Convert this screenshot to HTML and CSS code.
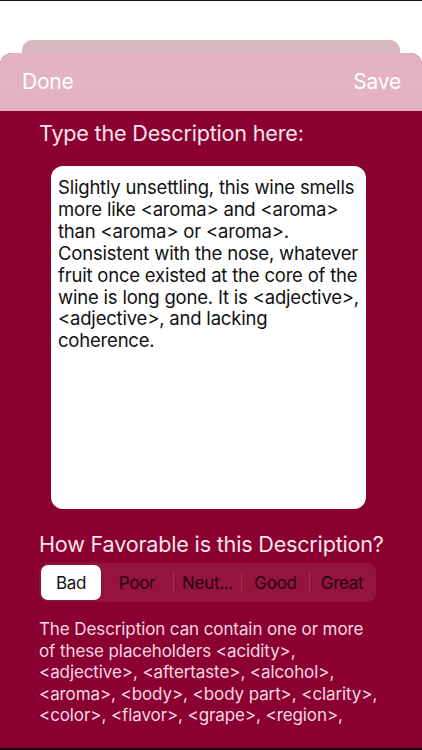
FILE: index.html
```html
<!DOCTYPE html>
<html lang="en">
<head>
  <meta charset="UTF-8">
  <meta name="viewport" content="width=device-width, initial-scale=1.0">
  <title>Edit Description</title>
  <link rel="stylesheet" href="styles.css">
</head>
<body>
  <div class="screen">
    <div class="sheet-behind"></div>
    <div class="sheet">
      <div class="sheet-header">
        <a href="#" class="nav-btn">Done</a>
        <a href="#" class="nav-btn">Save</a>
      </div>
      <div class="sheet-body">
        <div class="field-label">Type the Description here:</div>
        <div class="description-box" contenteditable="true">Slightly unsettling, this wine smells more like &lt;aroma&gt; and &lt;aroma&gt; than &lt;aroma&gt; or &lt;aroma&gt;. Consistent with the nose, whatever fruit once existed at the core of the wine is long gone. It is &lt;adjective&gt;, &lt;adjective&gt;, and lacking coherence.</div>
        <div class="field-label favor-label">How Favorable is this Description?</div>
        <div class="segmented">
          <button class="segment selected">Bad</button>
          <button class="segment">Poor</button>
          <button class="segment divided">Neut...</button>
          <button class="segment divided">Good</button>
          <button class="segment divided">Great</button>
        </div>
        <p class="hint">The Description can contain one or more of these placeholders &lt;acidity&gt;, &lt;adjective&gt;, &lt;aftertaste&gt;, &lt;alcohol&gt;, &lt;aroma&gt;, &lt;body&gt;, &lt;body part&gt;, &lt;clarity&gt;, &lt;color&gt;, &lt;flavor&gt;, &lt;grape&gt;, &lt;region&gt;,</p>
      </div>
    </div>
  </div>
</body>
</html>
```

FILE: styles.css
```css
* {
  box-sizing: border-box;
}

body {
  margin: 0;
  background-color: #fff;
  font-family: Inter, "Liberation Sans", sans-serif;
}

.screen {
  width: 422px;
  height: 750px;
  display: flex;
  flex-direction: column;
  border-top: 1px solid #111;
  border-bottom: 2px solid #111;
  overflow: hidden;
}

/* the card peeking out behind the modal */
.sheet-behind {
  margin: 39px 22px 0;
  height: 13px;
  background-color: #d7b8bf;
  border-radius: 10px 10px 0 0;
}

.sheet {
  flex: 1;
  display: flex;
  flex-direction: column;
  border-radius: 12px 12px 0 0;
  overflow: hidden;
  background-color: #8a0031;
}

.sheet-header {
  height: 58px;
  display: flex;
  justify-content: space-between;
  align-items: center;
  padding: 0 22px 2px;
  background: linear-gradient(to bottom, #e2b1c3, #e4b4c6 60%, #e1afc1);
}

.nav-btn {
  color: #fff;
  text-decoration: none;
  font-size: 21px;
  letter-spacing: -0.2px;
}

.nav-btn:last-child {
  margin-right: -1px;
}

.sheet-body {
  flex: 1;
  padding: 8px 0 0 39px;
}

.field-label {
  color: #f7e3ea;
  font-size: 21.6px;
  line-height: 28px;
  letter-spacing: -0.2px;
}

.description-box {
  margin: 19px 0 0 12px;
  width: 315px;
  height: 343px;
  padding: 11px 4px 11px 7px;
  background-color: #fff;
  border-radius: 12px;
  color: #111;
  font-size: 18.5px;
  line-height: 21.9px;
  letter-spacing: -0.2px;
  outline: none;
}

.favor-label {
  margin-top: 21px;
}

.segmented {
  margin-top: 5px;
  width: 337px;
  height: 39px;
  padding: 2px;
  display: grid;
  grid-template-columns: 60px 72px 68px 68px 1fr;
  background-color: #94143d;
  border-radius: 9px;
}

.segment {
  border: none;
  background: none;
  padding: 0;
  font-family: inherit;
  font-size: 17px;
  letter-spacing: -0.3px;
  color: #260010;
  cursor: pointer;
}

.segment.selected {
  background-color: #fff;
  color: #111;
  border-radius: 7px;
  box-shadow: 0 1px 3px rgba(0,0,0,0.15);
}

.segment.divided {
  border-left: 1px solid #a22d53;
  margin: 7px 0;
}

.hint {
  margin: 17px 0 0;
  width: 340px;
  color: #f4d7e1;
  font-size: 17px;
  line-height: 21.5px;
  letter-spacing: -0.1px;
}
```
